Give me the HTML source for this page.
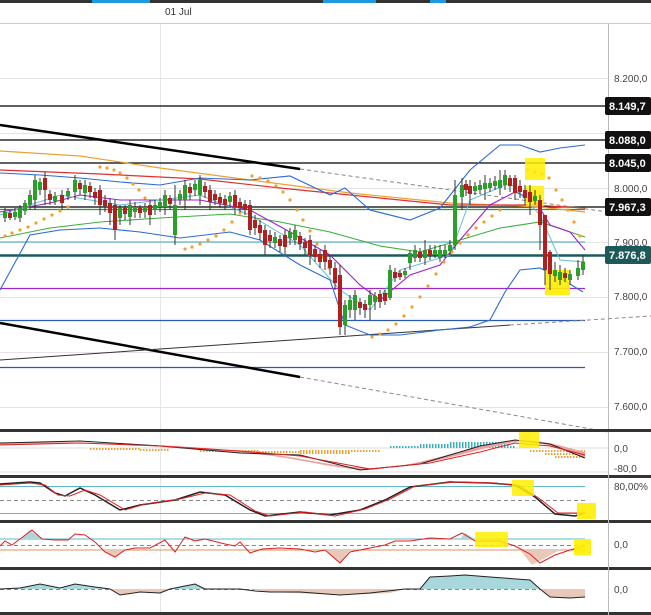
<!DOCTYPE html>
<html><head><meta charset="utf-8"><style>
html,body{margin:0;padding:0;background:#fff;}
svg{display:block;font-family:"Liberation Sans",sans-serif;}
</style></head><body>
<svg width="651" height="615" viewBox="0 0 651 615" xmlns="http://www.w3.org/2000/svg">
<rect width="651" height="615" fill="#fff"/>
<rect x="0" y="0" width="651" height="3" fill="#333"/>
<rect x="92" y="0" width="58" height="3" fill="#1e9be0"/>
<rect x="323" y="0" width="30" height="3" fill="#1e9be0"/>
<rect x="340" y="0" width="36" height="3" fill="#1e9be0"/>
<rect x="430" y="0" width="16" height="3" fill="#1e9be0"/>
<text x="165" y="15" font-size="10" fill="#333">01 Jul</text>
<line x1="0" y1="23.5" x2="651" y2="23.5" stroke="#ccc"/>
<line x1="160.5" y1="24" x2="160.5" y2="615" stroke="#e4e4e4"/>
<line x1="608.5" y1="24" x2="608.5" y2="615" stroke="#bbb"/>
<g stroke="#e4e4e4">
<line x1="0" y1="78.5" x2="608" y2="78.5"/><line x1="0" y1="133.5" x2="608" y2="133.5"/><line x1="0" y1="188.5" x2="608" y2="188.5"/>
<line x1="0" y1="242.5" x2="608" y2="242.5"/><line x1="0" y1="297.5" x2="608" y2="297.5"/><line x1="0" y1="352.5" x2="608" y2="352.5"/><line x1="0" y1="407.5" x2="608" y2="407.5"/>
</g>
<g font-size="10" fill="#444">
<text x="614" y="82">8.200,0</text><text x="614" y="192">8.000,0</text><text x="614" y="246">7.900,0</text>
<text x="614" y="300">7.800,0</text><text x="614" y="355">7.700,0</text><text x="614" y="410">7.600,0</text>
</g>
<g stroke-width="1.3">
<line x1="0" y1="106" x2="608" y2="106" stroke="#000"/>
<line x1="0" y1="140" x2="608" y2="140" stroke="#000"/>
<line x1="0" y1="163" x2="608" y2="163" stroke="#000"/>
<line x1="0" y1="207" x2="608" y2="207" stroke="#000"/>
<line x1="0" y1="209.5" x2="585" y2="209.5" stroke="#2a9a2a"/>
<line x1="0" y1="242" x2="585" y2="242" stroke="#5ab8c8"/>
<line x1="0" y1="255.5" x2="608" y2="255.5" stroke="#1c5a5a" stroke-width="2.5"/>
<line x1="0" y1="288.5" x2="585" y2="288.5" stroke="#9a2ac8"/>
<line x1="0" y1="320.5" x2="585" y2="320.5" stroke="#2a5ab0"/>
<line x1="0" y1="367.5" x2="585" y2="367.5" stroke="#2a5ab0"/>
</g>
<line x1="0" y1="125" x2="300" y2="169" stroke="#000" stroke-width="2.5"/>
<line x1="300" y1="169" x2="608" y2="212" stroke="#888" stroke-dasharray="4,3"/>
<line x1="0" y1="323" x2="300" y2="377" stroke="#000" stroke-width="2.5"/>
<line x1="300" y1="377" x2="608" y2="432" stroke="#888" stroke-dasharray="4,3"/>
<line x1="0" y1="360" x2="510" y2="325" stroke="#333" stroke-width="1"/>
<line x1="510" y1="325" x2="651" y2="316" stroke="#888" stroke-dasharray="4,3"/>
<polyline fill="none" stroke="#f0a030" stroke-width="1.2" points="0,151 80,156 160,168 250,180 350,193 450,203 540,207 585,212"/>
<polyline fill="none" stroke="#e03030" stroke-width="1.2" points="0,170 100,174 200,179 280,188 380,198 450,205 530,205 585,208"/>
<polyline fill="none" stroke="#3ab03a" stroke-width="1.1" points="0,238 50,228 100,222 160,218 230,214 280,222 330,232 380,246 420,252 460,240 500,228 540,222 585,237"/>
<polyline fill="none" stroke="#2a6ad8" stroke-width="1.1" points="0,173 40,175 80,178 120,182 160,185 200,178 250,180 290,176 330,195 345,188 370,210 410,220 440,208 470,170 500,145 520,145 540,152 560,148 585,145"/>
<polyline fill="none" stroke="#2a6ad8" stroke-width="1.1" points="0,290 30,235 60,230 100,228 140,232 180,238 230,232 260,240 300,265 330,280 345,325 370,335 400,335 440,330 470,327 490,320 505,292 520,270 540,268 560,278 583,292"/>
<polyline fill="none" stroke="#a020d0" stroke-width="1.1" points="0,212 50,203 80,195 120,200 160,200 200,200 250,210 290,232 330,255 360,285 380,300 410,275 440,265 460,240 490,205 515,192 535,200 550,225 570,232 585,250"/>
<polyline fill="none" stroke="#60c0d0" stroke-width="1" points="0,215 60,195 120,205 200,195 250,215 300,245 340,290 370,310 400,270 450,255 470,200 510,183 540,215 560,260 585,262"/>
<g fill="#f0a030">
<circle cx="5" cy="236" r="1.6"/><circle cx="12" cy="233" r="1.6"/><circle cx="20" cy="230" r="1.6"/><circle cx="28" cy="227" r="1.6"/><circle cx="36" cy="223" r="1.6"/><circle cx="44" cy="219" r="1.6"/><circle cx="52" cy="215" r="1.6"/><circle cx="60" cy="211" r="1.6"/><circle cx="68" cy="207" r="1.6"/>
<circle cx="100" cy="167" r="1.6"/><circle cx="107" cy="168" r="1.6"/><circle cx="114" cy="170" r="1.6"/><circle cx="120" cy="173" r="1.6"/><circle cx="127" cy="178" r="1.6"/><circle cx="133" cy="184" r="1.6"/><circle cx="139" cy="190" r="1.6"/><circle cx="145" cy="198" r="1.6"/>
<circle cx="185" cy="249" r="1.6"/><circle cx="192" cy="247" r="1.6"/><circle cx="200" cy="244" r="1.6"/><circle cx="208" cy="240" r="1.6"/><circle cx="216" cy="236" r="1.6"/><circle cx="224" cy="230" r="1.6"/><circle cx="232" cy="222" r="1.6"/><circle cx="240" cy="213" r="1.6"/>
<circle cx="252" cy="176" r="1.6"/><circle cx="260" cy="178" r="1.6"/><circle cx="268" cy="181" r="1.6"/><circle cx="276" cy="186" r="1.6"/><circle cx="283" cy="192" r="1.6"/><circle cx="290" cy="200" r="1.6"/><circle cx="297" cy="210" r="1.6"/><circle cx="303" cy="220" r="1.6"/><circle cx="310" cy="231" r="1.6"/><circle cx="317" cy="244" r="1.6"/><circle cx="323" cy="257" r="1.6"/><circle cx="329" cy="268" r="1.6"/>
<circle cx="372" cy="337" r="1.6"/><circle cx="380" cy="334" r="1.6"/><circle cx="388" cy="330" r="1.6"/><circle cx="396" cy="324" r="1.6"/><circle cx="404" cy="316" r="1.6"/><circle cx="412" cy="307" r="1.6"/><circle cx="420" cy="297" r="1.6"/><circle cx="428" cy="286" r="1.6"/><circle cx="436" cy="274" r="1.6"/><circle cx="444" cy="262" r="1.6"/><circle cx="452" cy="252" r="1.6"/><circle cx="460" cy="243" r="1.6"/><circle cx="468" cy="235" r="1.6"/><circle cx="476" cy="228" r="1.6"/><circle cx="484" cy="222" r="1.6"/><circle cx="492" cy="216" r="1.6"/><circle cx="500" cy="210" r="1.6"/>
<circle cx="528" cy="170" r="1.6"/><circle cx="535" cy="172" r="1.6"/><circle cx="542" cy="174" r="1.6"/><circle cx="549" cy="178" r="1.6"/><circle cx="556" cy="190" r="1.6"/><circle cx="562" cy="200" r="1.6"/><circle cx="568" cy="210" r="1.6"/><circle cx="574" cy="222" r="1.6"/><circle cx="580" cy="236" r="1.6"/>
</g>
<rect x="525" y="158" width="20" height="22" fill="#ffee00" opacity="0.85"/>
<rect x="526" y="186" width="18" height="20" fill="#ffee00" opacity="0.85"/>
<rect x="545" y="270" width="25" height="25" fill="#ffee00" opacity="0.9"/>
<g stroke="#333" stroke-width="1">
<path d="M5 208V222M10 210V220M15 208V220M20 205V222M25 200V215M30 190V210M35 175V210M40 178V195M45 172V205M50 190V205M55 192V205M62 190V210M68 188V200M75 175V200M80 180V195M85 180V200M90 182V198M95 188V205M100 185V215M105 195V212M110 198V225M115 200V240M120 205V225M125 205V220M130 200V225M135 202V218M140 205V218M145 203V218M150 200V225M155 200V215M160 198V212M165 190V215M170 195V210M175 185V245M180 190V205M185 180V210M190 183V200M195 180V196M200 175V205M205 182V198M210 185V210M215 190V205M220 193V208M225 195V210M230 192V208M235 190V215M240 198V212M245 200V215M250 200V235M255 215V235M260 220V240M265 225V255M270 230V248M275 232V248M280 235V252M285 230V255M290 228V245M295 225V245M300 232V250M305 238V255M310 235V265M315 245V262M320 250V268M325 245V270M330 255V275M335 262V290M340 265V335M345 300V335M350 295V318M355 290V320M360 298V315M365 300V318M370 290V320M375 292V310M380 290V308M385 290V305M390 265V300M395 268V282M400 270V280M405 268V278M410 250V270M415 245V262M420 248V262M425 240V265M430 245V260M435 245V258M440 245V262M445 245V258M450 240V255M455 180V250M462 178V210M466 180V196M470 180V205M475 182V195M480 180V194M485 175V200M490 178V192M495 176V190M500 170V195M505 170V190M510 175V192M515 175V200M520 180V198M525 185V205M530 185V215M535 190V205M540 195V250M545 225V285M550 250V290M555 262V282M560 265V285M565 268V282M570 270V285M578 260V280M583 255V275"/>
</g>
<g>
<rect x="3" y="212" width="4" height="6" fill="#2aa02a"/><rect x="8" y="213" width="4" height="5" fill="#b02020"/><rect x="13" y="212" width="4" height="5" fill="#2aa02a"/>
<rect x="18" y="208" width="4" height="10" fill="#2aa02a"/><rect x="23" y="203" width="4" height="8" fill="#2aa02a"/><rect x="28" y="195" width="4" height="10" fill="#2aa02a"/>
<rect x="33" y="180" width="4" height="20" fill="#2aa02a"/><rect x="38" y="182" width="4" height="8" fill="#2aa02a"/><rect x="43" y="178" width="4" height="12" fill="#b02020"/><rect x="48" y="194" width="4" height="6" fill="#b02020"/><rect x="53" y="196" width="4" height="5" fill="#2aa02a"/><rect x="60" y="195" width="4" height="8" fill="#b02020"/><rect x="66" y="191" width="4" height="5" fill="#2aa02a"/>
<rect x="73" y="180" width="4" height="12" fill="#2aa02a"/><rect x="78" y="183" width="4" height="6" fill="#b02020"/><rect x="83" y="185" width="4" height="8" fill="#2aa02a"/><rect x="88" y="186" width="4" height="6" fill="#b02020"/><rect x="93" y="192" width="4" height="6" fill="#b02020"/>
<rect x="98" y="190" width="4" height="15" fill="#b02020"/><rect x="103" y="200" width="4" height="6" fill="#b02020"/><rect x="108" y="203" width="4" height="10" fill="#b02020"/><rect x="113" y="205" width="4" height="25" fill="#b02020"/><rect x="118" y="208" width="4" height="10" fill="#2aa02a"/><rect x="123" y="208" width="4" height="6" fill="#b02020"/><rect x="128" y="205" width="4" height="12" fill="#2aa02a"/>
<rect x="133" y="207" width="4" height="5" fill="#2aa02a"/><rect x="138" y="208" width="4" height="5" fill="#b02020"/><rect x="143" y="207" width="4" height="5" fill="#2aa02a"/>
<rect x="148" y="205" width="4" height="10" fill="#b02020"/><rect x="153" y="205" width="4" height="5" fill="#2aa02a"/><rect x="158" y="202" width="4" height="5" fill="#2aa02a"/><rect x="163" y="195" width="4" height="12" fill="#2aa02a"/><rect x="168" y="198" width="4" height="6" fill="#b02020"/><rect x="173" y="205" width="4" height="30" fill="#2aa02a"/><rect x="178" y="194" width="4" height="6" fill="#2aa02a"/><rect x="183" y="185" width="4" height="15" fill="#2aa02a"/>
<rect x="188" y="187" width="4" height="6" fill="#b02020"/><rect x="193" y="184" width="4" height="6" fill="#2aa02a"/>
<rect x="198" y="180" width="4" height="15" fill="#2aa02a"/><rect x="203" y="186" width="4" height="6" fill="#b02020"/><rect x="208" y="190" width="4" height="12" fill="#b02020"/><rect x="213" y="194" width="4" height="6" fill="#b02020"/><rect x="218" y="197" width="4" height="6" fill="#b02020"/><rect x="223" y="199" width="4" height="6" fill="#b02020"/><rect x="228" y="196" width="4" height="6" fill="#2aa02a"/><rect x="233" y="195" width="4" height="12" fill="#b02020"/><rect x="238" y="202" width="4" height="6" fill="#b02020"/><rect x="243" y="204" width="4" height="6" fill="#b02020"/><rect x="248" y="205" width="4" height="25" fill="#b02020"/><rect x="253" y="220" width="4" height="8" fill="#b02020"/><rect x="258" y="225" width="4" height="8" fill="#b02020"/>
<rect x="263" y="230" width="4" height="15" fill="#b02020"/><rect x="268" y="235" width="4" height="6" fill="#b02020"/><rect x="273" y="237" width="4" height="6" fill="#2aa02a"/><rect x="278" y="239" width="4" height="7" fill="#b02020"/><rect x="283" y="235" width="4" height="12" fill="#b02020"/><rect x="288" y="232" width="4" height="6" fill="#2aa02a"/><rect x="293" y="230" width="4" height="10" fill="#2aa02a"/><rect x="298" y="236" width="4" height="8" fill="#b02020"/><rect x="303" y="242" width="4" height="6" fill="#b02020"/><rect x="308" y="240" width="4" height="15" fill="#b02020"/><rect x="313" y="249" width="4" height="8" fill="#b02020"/><rect x="318" y="254" width="4" height="8" fill="#b02020"/>
<rect x="323" y="250" width="4" height="12" fill="#b02020"/><rect x="328" y="260" width="4" height="8" fill="#b02020"/><rect x="333" y="268" width="4" height="15" fill="#b02020"/><rect x="338" y="275" width="4" height="52" fill="#b02020"/><rect x="343" y="305" width="4" height="20" fill="#2aa02a"/><rect x="348" y="300" width="4" height="10" fill="#2aa02a"/><rect x="353" y="295" width="4" height="15" fill="#2aa02a"/><rect x="358" y="302" width="4" height="6" fill="#b02020"/><rect x="363" y="304" width="4" height="6" fill="#b02020"/>
<rect x="368" y="295" width="4" height="10" fill="#2aa02a"/><rect x="373" y="296" width="4" height="6" fill="#2aa02a"/><rect x="378" y="294" width="4" height="8" fill="#b02020"/><rect x="383" y="293" width="4" height="8" fill="#b02020"/><rect x="388" y="270" width="4" height="28" fill="#2aa02a"/><rect x="393" y="272" width="4" height="6" fill="#b02020"/><rect x="398" y="273" width="4" height="4" fill="#b02020"/><rect x="403" y="271" width="4" height="4" fill="#2aa02a"/><rect x="408" y="253" width="4" height="10" fill="#2aa02a"/><rect x="413" y="250" width="4" height="8" fill="#2aa02a"/><rect x="418" y="252" width="4" height="6" fill="#b02020"/>
<rect x="423" y="250" width="4" height="8" fill="#2aa02a"/><rect x="428" y="250" width="4" height="6" fill="#b02020"/><rect x="433" y="250" width="4" height="5" fill="#2aa02a"/><rect x="438" y="250" width="4" height="8" fill="#2aa02a"/><rect x="443" y="250" width="4" height="5" fill="#2aa02a"/><rect x="448" y="245" width="4" height="6" fill="#2aa02a"/><rect x="453" y="195" width="4" height="50" fill="#2aa02a"/><rect x="460" y="185" width="4" height="12" fill="#2aa02a"/><rect x="464" y="184" width="4" height="6" fill="#b02020"/>
<rect x="468" y="186" width="4" height="8" fill="#b02020"/><rect x="473" y="186" width="4" height="5" fill="#2aa02a"/><rect x="478" y="185" width="4" height="5" fill="#2aa02a"/><rect x="483" y="183" width="4" height="6" fill="#2aa02a"/><rect x="488" y="183" width="4" height="5" fill="#2aa02a"/><rect x="493" y="181" width="4" height="5" fill="#2aa02a"/><rect x="498" y="180" width="4" height="8" fill="#2aa02a"/><rect x="503" y="175" width="4" height="10" fill="#2aa02a"/><rect x="508" y="178" width="4" height="8" fill="#b02020"/>
<rect x="513" y="178" width="4" height="15" fill="#b02020"/><rect x="518" y="186" width="4" height="6" fill="#b02020"/><rect x="523" y="190" width="4" height="8" fill="#b02020"/><rect x="528" y="192" width="4" height="10" fill="#b02020"/><rect x="533" y="196" width="4" height="5" fill="#2aa02a"/><rect x="538" y="200" width="4" height="25" fill="#b02020"/><rect x="543" y="215" width="4" height="55" fill="#b02020"/>
<rect x="548" y="252" width="4" height="22" fill="#b02020"/><rect x="553" y="270" width="4" height="6" fill="#2aa02a"/><rect x="558" y="272" width="4" height="8" fill="#2aa02a"/><rect x="563" y="273" width="4" height="5" fill="#b02020"/><rect x="568" y="274" width="4" height="6" fill="#2aa02a"/><rect x="576" y="268" width="4" height="8" fill="#2aa02a"/><rect x="581" y="262" width="4" height="8" fill="#2aa02a"/>
</g>
<g font-size="11" font-weight="bold" fill="#fff">
<rect x="605" y="97" width="46" height="18" rx="2" fill="#111"/><text x="609" y="110">8.149,7</text>
<rect x="605" y="131" width="46" height="18" rx="2" fill="#111"/><text x="609" y="144">8.088,0</text>
<rect x="605" y="154" width="46" height="18" rx="2" fill="#111"/><text x="609" y="167">8.045,0</text>
<rect x="605" y="198" width="46" height="18" rx="2" fill="#111"/><text x="609" y="211">7.967,3</text>
<rect x="605" y="246" width="46" height="18" rx="2" fill="#1c5a5a"/><text x="609" y="259">7.876,8</text>
</g>
<g fill="#333">
<rect x="0" y="429" width="651" height="3"/><rect x="0" y="475" width="651" height="3"/><rect x="0" y="520" width="651" height="3"/><rect x="0" y="567" width="651" height="3"/><rect x="0" y="612" width="651" height="3"/>
</g>
<line x1="608.5" y1="432" x2="608.5" y2="615" stroke="#bbb"/>
<line x1="0" y1="448" x2="608" y2="448" stroke="#ddd"/>
<line x1="0" y1="472" x2="608" y2="472" stroke="#ddd"/>
<g stroke="#f0a030" stroke-width="2" stroke-dasharray="1.5,1.5">
<line x1="90" y1="449" x2="140" y2="449"/><line x1="140" y1="450" x2="170" y2="450"/>
<line x1="200" y1="451" x2="260" y2="451"/><line x1="250" y1="452" x2="300" y2="452"/><line x1="300" y1="451" x2="380" y2="451"/><line x1="300" y1="453" x2="350" y2="453"/>
<line x1="530" y1="451" x2="585" y2="451"/><line x1="545" y1="454" x2="585" y2="454"/><line x1="555" y1="457" x2="585" y2="457"/>
</g>
<g stroke="#3ab0c0" stroke-width="2" stroke-dasharray="1.5,1.5">
<line x1="390" y1="447" x2="515" y2="447"/><line x1="420" y1="445" x2="510" y2="445"/><line x1="450" y1="443" x2="505" y2="443"/>
</g>
<path d="M0 443 C80 440 150 445 230 452 C300 456 320 468 370 470 C420 466 470 446 515 440 C540 440 560 450 585 457 L585 452 C560 446 540 438 515 442 C470 450 420 470 370 468 C320 466 300 455 230 450 C150 443 80 442 0 445Z" fill="#f0a0a0"/>
<polyline fill="none" stroke="#222" points="0,443 80,441 160,446 240,453 300,455 360,470 420,464 480,446 515,440 550,444 585,458"/>
<polyline fill="none" stroke="#e02020" points="0,445 80,443 160,446 240,451 300,456 370,469 430,463 480,452 515,443 550,446 585,455"/>
<rect x="519" y="432" width="20" height="16" fill="#ffee00" opacity="0.85"/>
<g font-size="10" fill="#444"><text x="614" y="452">0,0</text><text x="614" y="472">-80,0</text></g>
<line x1="0" y1="486.5" x2="585" y2="486.5" stroke="#5ab8c8"/>
<line x1="0" y1="500.5" x2="585" y2="500.5" stroke="#888" stroke-dasharray="4,3"/>
<line x1="0" y1="513.5" x2="585" y2="513.5" stroke="#e09060"/>
<polyline fill="none" stroke="#222" stroke-width="1.5" points="0,484 30,482 40,483 55,493 65,496 80,488 95,495 120,510 140,505 175,500 200,492 225,495 250,510 265,516 300,512 330,515 360,510 385,500 410,487 450,482 490,483 515,485 535,497 555,514 575,516 585,513"/>
<polyline fill="none" stroke="#e02020" points="0,485 30,483 45,485 58,495 70,496 85,490 100,495 125,510 145,504 180,499 205,493 230,495 255,511 270,516 305,512 335,516 365,509 390,499 415,486 455,482 495,483 520,486 540,499 558,513 585,513"/>
<rect x="512" y="480" width="22" height="16" fill="#ffee00" opacity="0.85"/>
<rect x="577" y="503" width="19" height="16" fill="#ffee00" opacity="0.9"/>
<text x="614" y="490" font-size="10" fill="#444">80,00%</text>
<line x1="0" y1="539" x2="585" y2="539" stroke="#5ab8c8"/>
<line x1="0" y1="545.5" x2="585" y2="545.5" stroke="#888" stroke-dasharray="4,3"/>
<line x1="0" y1="550" x2="585" y2="550" stroke="#e09060"/>
<path d="M20 539 L30 530 L42 539Z M460 539 L465 533 L475 539Z" fill="#a8d8dc"/>
<path d="M100 550 L115 557 L125 550Z M325 550 L340 563 L350 550Z M520 550 L532 565 L560 550Z" fill="#e8c8b8"/>
<polyline fill="none" stroke="#e02020" points="0,546 5,541 12,545 20,539 32,530 42,539 55,540 68,540 75,534 85,535 95,542 105,552 115,557 125,550 135,548 150,548 165,540 175,552 185,537 195,541 205,539 225,544 235,546 240,542 250,553 262,549 280,548 300,549 315,552 325,550 340,563 350,552 370,548 385,545 395,541 410,541 430,538 450,539 462,533 475,541 500,541 515,546 530,554 540,563 555,555 570,550 585,546"/>
<rect x="475" y="532" width="33" height="15" fill="#ffee00" opacity="0.85"/>
<rect x="574" y="539" width="17" height="16" fill="#ffee00" opacity="0.9"/>
<text x="614" y="548" font-size="10" fill="#444">0,0</text>
<line x1="0" y1="589.5" x2="585" y2="589.5" stroke="#888" stroke-dasharray="4,3"/>
<path d="M0 589 L20 588 L40 584 L60 588 L75 584 L95 587 L110 589Z M170 589 L195 584 L205 589Z M420 589 L430 577 L450 576 L465 575 L490 577 L530 580 L540 589Z" fill="#a8d8dc"/>
<path d="M110 589 L120 595 L140 592 L160 593 L170 589Z M250 589 L270 592 L340 595 L390 593 L405 589Z M540 589 L550 597 L570 598 L585 597 L585 589Z" fill="#e8c8b8"/>
<polyline fill="none" stroke="#222" points="0,589 20,588 40,584 60,588 75,584 95,587 110,589 120,595 140,592 160,593 170,589 195,584 205,589 240,589 255,591 270,592 300,592 340,595 370,593 405,589 420,589 430,577 450,576 465,575 490,577 530,580 540,589 550,597 570,598 585,597"/>
<text x="614" y="593" font-size="10" fill="#444">0,0</text>
</svg>
</body></html>
